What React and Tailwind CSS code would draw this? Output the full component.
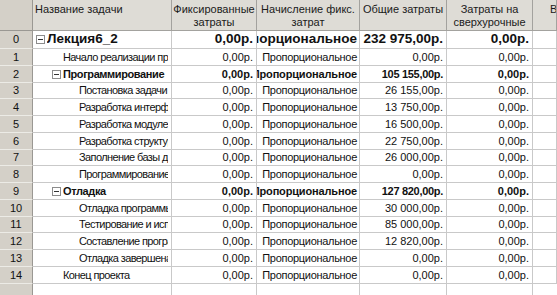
import React from "react";

const rows = [
  { n: 0, name: "Лекция6_2", lvl: 0, sum: true, big: true, fixed: "0,00р.", total: "232 975,00р.", over: "0,00р.", h: "h-[18px]" },
  { n: 1, name: "Начало реализации проекта", lvl: 1, fixed: "0,00р.", total: "0,00р.", over: "0,00р.", h: "h-[17px]" },
  { n: 2, name: "Программирование", lvl: 1, sum: true, fixed: "0,00р.", total: "105 155,00р.", over: "0,00р.", h: "h-[17px]" },
  { n: 3, name: "Постановка задачи", lvl: 2, fixed: "0,00р.", total: "26 155,00р.", over: "0,00р.", h: "h-[16px]" },
  { n: 4, name: "Разработка интерфейса", lvl: 2, fixed: "0,00р.", total: "13 750,00р.", over: "0,00р.", h: "h-[17px]" },
  { n: 5, name: "Разработка модулей", lvl: 2, fixed: "0,00р.", total: "16 500,00р.", over: "0,00р.", h: "h-[17px]" },
  { n: 6, name: "Разработка структуры", lvl: 2, fixed: "0,00р.", total: "22 750,00р.", over: "0,00р.", h: "h-[17px]" },
  { n: 7, name: "Заполнение базы данных", lvl: 2, fixed: "0,00р.", total: "26 000,00р.", over: "0,00р.", h: "h-[16px]" },
  { n: 8, name: "Программирование завершено", lvl: 2, fixed: "0,00р.", total: "0,00р.", over: "0,00р.", h: "h-[17px]" },
  { n: 9, name: "Отладка", lvl: 1, sum: true, fixed: "0,00р.", total: "127 820,00р.", over: "0,00р.", h: "h-[17px]" },
  { n: 10, name: "Отладка программы", lvl: 2, fixed: "0,00р.", total: "30 000,00р.", over: "0,00р.", h: "h-[17px]" },
  { n: 11, name: "Тестирование и исправление", lvl: 2, fixed: "0,00р.", total: "85 000,00р.", over: "0,00р.", h: "h-[16px]" },
  { n: 12, name: "Составление программы", lvl: 2, fixed: "0,00р.", total: "12 820,00р.", over: "0,00р.", h: "h-[17px]" },
  { n: 13, name: "Отладка завершена", lvl: 2, fixed: "0,00р.", total: "0,00р.", over: "0,00р.", h: "h-[17px]" },
  { n: 14, name: "Конец проекта", lvl: 1, fixed: "0,00р.", total: "0,00р.", over: "0,00р.", h: "h-[17px]" },
];

const indent = ["pl-[3px]", "pl-[19px]", "pl-[35px]"];

function MinusBox() {
  return (
    <span className="w-[9px] h-[9px] shrink-0 border border-[#8c8c8c] bg-white flex items-center justify-center mr-[2px]">
      <span className="w-[5px] h-px bg-[#333]" />
    </span>
  );
}

const grid = "border-r border-b border-[#c9c9c9]";

function Row({ r }) {
  const weight = r.sum ? "font-bold" : "font-normal";
  const size = r.big ? "text-[13.5px]" : "text-[11px]";
  const txt = `${weight} ${size}`;
  const nameTrack = r.big ? "" : r.sum ? "tracking-[-0.4px]" : "tracking-[-0.6px]";
  const accTrack = r.big ? "" : r.sum ? "tracking-[-0.15px]" : "tracking-[-0.3px]";
  const numTrack = r.sum && !r.big ? "tracking-[-0.3px]" : "";
  return (
    <div className={`flex ${r.h} bg-white text-[#111]`}>
      <div className="w-[33px] shrink-0 bg-[#d4d0c8] border-r border-[#9a9893] border-b border-b-[#ecebe6] flex items-center justify-center text-[11px] text-[#111]">
        {r.n}
      </div>
      <div className={`w-[139px] shrink-0 ${grid} flex items-center pr-[3px] ${indent[r.lvl]}`}>
        {r.sum ? <MinusBox /> : <span className="w-[11px] shrink-0" />}
        <span className={`min-w-0 flex-1 overflow-hidden whitespace-nowrap ${txt} ${nameTrack}`}>{r.name}</span>
      </div>
      <div className={`w-[85px] shrink-0 ${grid} flex items-center justify-end pr-[3px] whitespace-nowrap ${txt}`}>
        {r.fixed}
      </div>
      <div className={`w-[103px] shrink-0 ${grid} flex items-center justify-end pr-[2px] overflow-hidden`}>
        <span className={`shrink-0 whitespace-nowrap ${txt} ${accTrack}`}>Пропорциональное</span>
      </div>
      <div className={`w-[87px] shrink-0 ${grid} flex items-center justify-end pr-[3px] whitespace-nowrap ${txt} ${numTrack}`}>
        {r.total}
      </div>
      <div className={`w-[86px] shrink-0 ${grid} flex items-center justify-end pr-[3px] whitespace-nowrap ${txt}`}>
        {r.over}
      </div>
      <div className={`flex-1 ${grid}`} />
    </div>
  );
}

export default function App() {
  const head = "shrink-0 bg-[#dedcd6] border-r border-b border-[#a3a29e] text-[11px] leading-[13px] text-[#1a1a1a] pt-[3px]";
  return (
    <div className="w-[557px] h-[295px] overflow-hidden bg-white" style={{ fontFamily: '"Liberation Sans", Arial, sans-serif' }}>
      <div className="flex h-[31px]">
        <div className="w-[33px] shrink-0 bg-[#d4d0c8] border-r border-b border-[#9a9893]" />
        <div className={`w-[139px] ${head} pl-[2px]`}>Название задачи</div>
        <div className={`w-[85px] ${head} text-center`}>Фиксированные<br />затраты</div>
        <div className={`w-[103px] ${head} text-center`}>Начисление фикс.<br />затрат</div>
        <div className={`w-[87px] ${head} text-center`}>Общие затраты</div>
        <div className={`w-[86px] ${head} text-center`}>Затраты на<br />сверхурочные</div>
        <div className={`flex-1 ${head} pl-[17px] whitespace-nowrap overflow-hidden`}>Выполнено</div>
      </div>
      {rows.map((r) => (
        <Row key={r.n} r={r} />
      ))}
      <div className="flex h-[20px] bg-white">
        <div className="w-[33px] shrink-0 bg-[#d4d0c8] border-r border-[#9a9893]" />
        <div className="w-[139px] shrink-0 border-r border-[#c9c9c9]" />
        <div className="w-[85px] shrink-0 border-r border-[#c9c9c9]" />
        <div className="w-[103px] shrink-0 border-r border-[#c9c9c9]" />
        <div className="w-[87px] shrink-0 border-r border-[#c9c9c9]" />
        <div className="w-[86px] shrink-0 border-r border-[#c9c9c9]" />
        <div className="flex-1" />
      </div>
    </div>
  );
}
